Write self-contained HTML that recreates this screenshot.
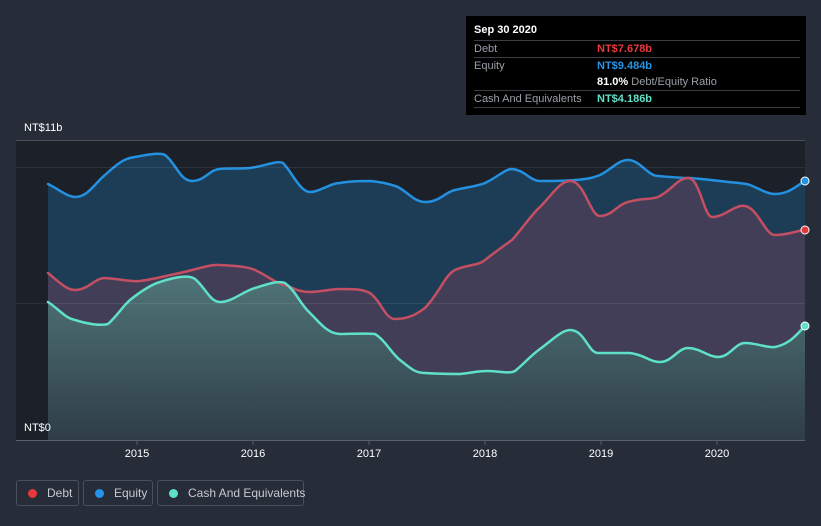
<!DOCTYPE html>
<html><head><meta charset="utf-8"><style>
body{margin:0;width:821px;height:526px;background:#262c38;font-family:"Liberation Sans",sans-serif;overflow:hidden;position:relative}
.t{position:absolute;color:#fff;font-size:11px}
.tip{position:absolute;left:466px;top:16px;width:340px;height:99px;background:#000}
.row{position:absolute;left:8px;width:326px;font-size:11px;color:#9aa0a8;border-top:1px solid #3a3d44}
.leg{position:absolute;top:480px;height:26px;border:1px solid #4a505c;border-radius:3px;color:#c6cad0;font-size:12px;line-height:25px;box-sizing:border-box;white-space:nowrap}
.dot{display:inline-block;width:9px;height:9px;border-radius:50%;margin:0 10px 0 11px;vertical-align:-1px}
</style></head><body>
<svg width="821" height="526" style="position:absolute;left:0;top:0">
<defs><linearGradient id="cg" x1="0" y1="0" x2="0" y2="1"><stop offset="0" stop-color="#4f7478"/><stop offset="1" stop-color="#2f3d48"/></linearGradient></defs>
<rect x="16" y="140" width="789" height="300" fill="#1c2029"/>
<line x1="16" y1="140.5" x2="805" y2="140.5" stroke="#4a505a"/>
<g id="e"><path d="M48,184 C60,190 68,197 75,197 C88,197 95,183 105,175 C115,166 122,160 130,158 C145,155 160,152 165,155 C175,162 180,181 192,181 C205,181 210,169 220,169 C230,168 240,169 250,168 C265,166 278,160 283,163 C292,172 300,192 310,192 C320,192 330,183 340,183 C350,181 360,181 370,181 C382,182 390,184 398,187 C410,194 415,202 425,202 C440,202 445,192 455,190 C468,187 478,186 485,183 C498,177 505,169 512,169 C525,170 530,181 540,181 C555,181 565,181 575,180 C590,179 595,177 600,175 C612,169 618,160 628,160 C640,160 648,176 658,176 C670,177 680,178 690,178 C705,179 710,180 720,181 C735,183 745,183 750,185 C760,189 767,194 775,194 C788,194 795,187 805,181 L805,440 L48,440Z" fill="#1d3c56"/></g>
<path d="M48,273 C60,283 67,290 75,290 C88,290 95,278 105,278 C120,279 130,282 140,281 C155,279 165,276 175,274 C195,270 210,264 220,265 C235,266 245,266 255,270 C268,276 275,283 285,285 C295,289 300,292 310,292 C320,292 330,289 340,289 C355,289 362,289 370,293 C382,302 385,319 395,319 C410,319 418,313 425,308 C440,292 445,275 455,270 C468,264 478,266 485,260 C495,252 505,245 512,240 C525,225 532,214 540,207 C552,195 560,181 570,181 C585,181 590,216 600,216 C612,216 618,204 628,202 C640,198 650,200 658,197 C672,190 678,178 688,178 C700,178 704,217 712,217 C725,217 735,204 745,206 C758,208 765,235 775,235 C788,235 795,231 805,230 L805,440 L48,440Z" fill="#433e57"/>
<path d="M48,302 C60,310 65,318 75,320 C88,324 100,326 108,324 C118,315 122,307 130,300 C140,292 150,285 160,282 C172,278 188,274 195,279 C205,287 210,302 220,302 C232,302 242,292 255,288 C265,285 278,280 285,283 C296,291 300,304 310,313 C320,323 328,334 340,334 C350,334 365,333 375,334 C385,340 392,354 400,360 C410,368 415,373 425,373 C440,374 450,374 460,374 C470,373 478,371 487,371 C498,371 510,374 515,371 C525,363 530,356 540,349 C552,340 562,330 570,330 C585,330 588,353 598,353 C612,353 620,353 630,353 C645,355 650,362 660,362 C672,362 678,348 688,348 C700,348 708,357 718,357 C730,357 735,343 745,343 C758,343 765,348 775,347 C790,344 797,334 805,326 L805,440 L48,440Z" fill="url(#cg)"/>
<g fill="none" stroke-width="2.5" stroke-linecap="round">
<path d="M48,184 C60,190 68,197 75,197 C88,197 95,183 105,175 C115,166 122,160 130,158 C145,155 160,152 165,155 C175,162 180,181 192,181 C205,181 210,169 220,169 C230,168 240,169 250,168 C265,166 278,160 283,163 C292,172 300,192 310,192 C320,192 330,183 340,183 C350,181 360,181 370,181 C382,182 390,184 398,187 C410,194 415,202 425,202 C440,202 445,192 455,190 C468,187 478,186 485,183 C498,177 505,169 512,169 C525,170 530,181 540,181 C555,181 565,181 575,180 C590,179 595,177 600,175 C612,169 618,160 628,160 C640,160 648,176 658,176 C670,177 680,178 690,178 C705,179 710,180 720,181 C735,183 745,183 750,185 C760,189 767,194 775,194 C788,194 795,187 805,181" stroke="#2391e0"/>
<path d="M48,273 C60,283 67,290 75,290 C88,290 95,278 105,278 C120,279 130,282 140,281 C155,279 165,276 175,274 C195,270 210,264 220,265 C235,266 245,266 255,270 C268,276 275,283 285,285 C295,289 300,292 310,292 C320,292 330,289 340,289 C355,289 362,289 370,293 C382,302 385,319 395,319 C410,319 418,313 425,308 C440,292 445,275 455,270 C468,264 478,266 485,260 C495,252 505,245 512,240 C525,225 532,214 540,207 C552,195 560,181 570,181 C585,181 590,216 600,216 C612,216 618,204 628,202 C640,198 650,200 658,197 C672,190 678,178 688,178 C700,178 704,217 712,217 C725,217 735,204 745,206 C758,208 765,235 775,235 C788,235 795,231 805,230" stroke="#c44f63"/>
<path d="M48,302 C60,310 65,318 75,320 C88,324 100,326 108,324 C118,315 122,307 130,300 C140,292 150,285 160,282 C172,278 188,274 195,279 C205,287 210,302 220,302 C232,302 242,292 255,288 C265,285 278,280 285,283 C296,291 300,304 310,313 C320,323 328,334 340,334 C350,334 365,333 375,334 C385,340 392,354 400,360 C410,368 415,373 425,373 C440,374 450,374 460,374 C470,373 478,371 487,371 C498,371 510,374 515,371 C525,363 530,356 540,349 C552,340 562,330 570,330 C585,330 588,353 598,353 C612,353 620,353 630,353 C645,355 650,362 660,362 C672,362 678,348 688,348 C700,348 708,357 718,357 C730,357 735,343 745,343 C758,343 765,348 775,347 C790,344 797,334 805,326" stroke="#5fe0c8"/>
</g>
<line x1="16" y1="167.5" x2="805" y2="167.5" stroke="#ffffff" stroke-opacity="0.08"/>
<line x1="16" y1="303.5" x2="805" y2="303.5" stroke="#ffffff" stroke-opacity="0.08"/>
<line x1="16" y1="440.5" x2="805" y2="440.5" stroke="#5a606a"/>
<g stroke="#5a606a"><line x1="137" y1="440" x2="137" y2="445"/><line x1="253" y1="440" x2="253" y2="445"/><line x1="369" y1="440" x2="369" y2="445"/><line x1="485" y1="440" x2="485" y2="445"/><line x1="601" y1="440" x2="601" y2="445"/><line x1="717" y1="440" x2="717" y2="445"/></g>
<circle cx="805" cy="181" r="4" fill="#2391e0" stroke="#fff"/>
<circle cx="805" cy="230" r="4" fill="#e03a3a" stroke="#fff"/>
<circle cx="805" cy="326" r="4" fill="#5fe0c8" stroke="#fff"/>
<g fill="#fff" font-size="11" font-family="Liberation Sans" text-anchor="middle"><text x="137" y="457">2015</text><text x="253" y="457">2016</text><text x="369" y="457">2017</text><text x="485" y="457">2018</text><text x="601" y="457">2019</text><text x="717" y="457">2020</text></g>
</svg>
<div class="t" style="left:24px;top:122px">NT$11b</div>
<div class="t" style="left:24px;top:422px">NT$0</div>
<div class="tip">
<div style="position:absolute;left:8px;top:8px;color:#fff;font-weight:bold;font-size:11px">Sep 30 2020</div>
<div class="row" style="top:24px;height:16px;line-height:16px">Debt<span style="position:absolute;left:123px;color:#e8383d;font-weight:bold">NT$7.678b</span></div>
<div class="row" style="top:41px;height:33px;line-height:16px">Equity<span style="position:absolute;left:123px;color:#2394e6;font-weight:bold">NT$9.484b</span><br><span style="position:absolute;left:123px;top:16px"><b style="color:#fff">81.0%</b> Debt/Equity Ratio</span></div>
<div class="row" style="top:74px;height:16px;line-height:16px;border-bottom:1px solid #3a3d44">Cash And Equivalents<span style="position:absolute;left:123px;color:#5fe0c8;font-weight:bold">NT$4.186b</span></div>
</div>
<div class="leg" style="left:16px;width:63px"><span class="dot" style="background:#e8383d"></span>Debt</div>
<div class="leg" style="left:83px;width:70px"><span class="dot" style="background:#2394e6"></span>Equity</div>
<div class="leg" style="left:157px;width:147px"><span class="dot" style="background:#5fe0c8"></span>Cash And Equivalents</div>
</body></html>
